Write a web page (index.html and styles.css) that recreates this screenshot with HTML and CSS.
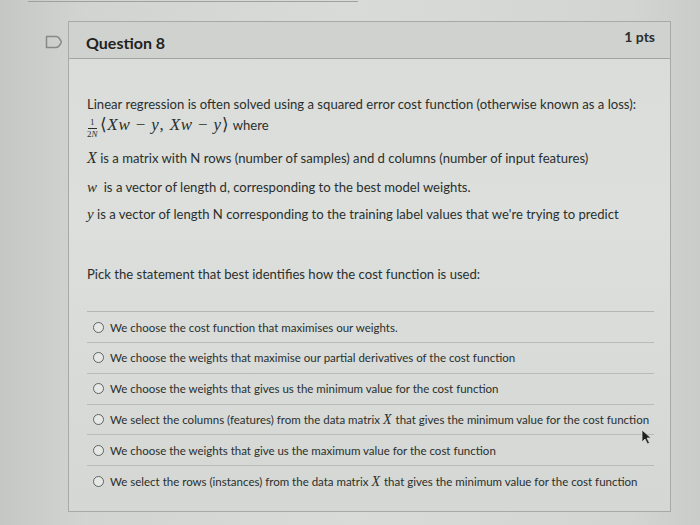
FILE: index.html
```html
<!DOCTYPE html>
<html>
<head>
<meta charset="utf-8">
<link rel="stylesheet" href="styles.css">
</head>
<body>
<div class="page">
  <div class="prev-edge"></div>
  <div class="question">
    <svg class="bookmark" width="18" height="14" viewBox="0 0 18 14" aria-hidden="true">
      <path d="M1.5 1.5 H11 Q13 1.5 14.2 3.2 L16 6.2 Q16.4 7 16 7.8 L14.2 10.8 Q13 12.5 11 12.5 H1.5 Z" fill="none" stroke="#858987" stroke-width="1.5" stroke-linejoin="round"/>
    </svg>
    <div class="q-header">
      <span class="q-title">Question 8</span>
      <span class="q-pts">1 pts</span>
    </div>
    <div class="q-body">
      <div class="q-text">
        <p class="intro">Linear regression is often solved using a squared error cost function (otherwise known as a loss):<br>
          <span class="frac"><span class="num">1</span><span class="den">2<i>N</i></span></span><span class="m">⟨<i>Xw</i> − <i>y</i>, <i>Xw</i> − <i>y</i>⟩</span> where</p>
        <p class="xline"><i class="mv">X</i> is a matrix with N rows (number of samples) and d columns (number of input features)</p>
        <p class="wline"><i class="mv sm">w</i> &nbsp;is a vector of length d, corresponding to the best model weights.</p>
        <p><i class="mv sm">y</i> is a vector of length N corresponding to the training label values that we're trying to predict</p>
        <p class="pick">Pick the statement that best identifies how the cost function is used:</p>
      </div>
      <ul class="answers">
        <li><span class="radio"></span>We choose the cost function that maximises our weights.</li>
        <li><span class="radio"></span>We choose the weights that maximise our partial derivatives of the cost function</li>
        <li><span class="radio"></span>We choose the weights that gives us the minimum value for the cost function</li>
        <li><span class="radio"></span>We select the columns (features) from the data matrix <i class="mv">X</i> that gives the minimum value for the cost function</li>
        <li><span class="radio"></span>We choose the weights that give us the maximum value for the cost function</li>
        <li><span class="radio"></span>We select the rows (instances) from the data matrix <i class="mv">X</i> that gives the minimum value for the cost function</li>
      </ul>
    </div>
    <svg class="cursor" width="12" height="16" viewBox="0 0 12 16" aria-hidden="true">
      <path d="M1 1 L1 13 L4 10 L6.5 15 L8.5 14 L6 9 L10 9 Z" fill="#1e2120" stroke="#d8dad7" stroke-width="0.8"/>
    </svg>
  </div>
</div>
</body>
</html>
```
FILE: styles.css
```css
html, body {
  margin: 0;
  padding: 0;
}
body {
  width: 700px;
  height: 525px;
  overflow: hidden;
  background: linear-gradient(90deg, #c4c7c4 0%, #d1d4d1 12%, #d8dbd8 50%, #d2d5d2 90%, #c9ccc9 100%);
  font-family: Lato, "Open Sans", sans-serif;
  color: #2a2f2d;
}
.prev-edge {
  margin-left: 28px;
  width: 330px;
  height: 1px;
  border-bottom: 1px solid #9ea29f;
}
.question {
  position: relative;
  margin: 19px 0 0 68px;
  width: 603px;
  height: 491px;
  border: 1px solid #a7aba8;
  box-sizing: border-box;
  background: linear-gradient(180deg, #d9dcd9 0%, #dcdfdc 40%, #d4d7d4 100%);
}
.bookmark {
  position: absolute;
  left: -24px;
  top: 13px;
}
.q-header {
  height: 37px;
  box-sizing: border-box;
  border-bottom: 1px solid #a2a6a3;
  background: #cfd2cf;
  display: flex;
  align-items: center;
  justify-content: space-between;
  padding: 0 15px 0 17px;
}
.q-title {
  font-size: 16px;
  font-weight: 700;
  color: #1f2321;
  padding-top: 4px;
}
.q-pts {
  font-size: 14px;
  font-weight: 700;
  color: #2a2e2c;
  padding-bottom: 8px;
}
.q-body {
  padding: 35px 14px 0 18px;
}
.q-text p {
  margin: 0 0 10px;
  font-size: 13.1px;
  line-height: 17px;
}
.q-text p.xline {
  margin-bottom: 12px;
}
.q-text p.intro {
  line-height: 21px;
  margin-bottom: 10px;
}
.frac {
  display: inline-flex;
  flex-direction: column;
  align-items: center;
  font-family: "Liberation Serif", serif;
  font-size: 9px;
  line-height: 9px;
  vertical-align: 5px;
  margin-right: 2px;
}
.frac .num {
  border-bottom: 1px solid #2a2f2d;
  padding: 0 2px 1px;
}
.frac .den {
  padding-top: 1px;
}
.m {
  font-family: "Liberation Serif", serif;
  font-size: 17px;
  line-height: 17px;
  letter-spacing: 0.8px;
}
.mv {
  font-family: "Liberation Serif", serif;
  font-size: 16px;
  line-height: 17px;
}
.mv.sm {
  font-size: 15px;
}
.q-text p.pick {
  margin-top: 43px;
  margin-bottom: 0;
}
.answers {
  list-style: none;
  margin: 28px 0 0;
  padding: 0;
  border-top: 1px solid #b3b7b4;
  width: 567px;
}
.answers li {
  display: flex;
  align-items: center;
  height: 29.8px;
  font-size: 11.5px;
  border-bottom: 1px solid #b8bcb9;
  padding-left: 6px;
  white-space: nowrap;
}
.answers li:first-child {
  height: 30px;
}
.answers li:last-child {
  border-bottom: none;
}
.answers .mv {
  font-size: 14px;
  margin: 0 4px 0 3px;
}
.radio {
  width: 9px;
  height: 9px;
  border: 1px solid #5f6461;
  border-radius: 50%;
  background: #e6e8e5;
  margin-right: 6px;
  flex: none;
}
.cursor {
  position: absolute;
  left: 572px;
  top: 407px;
}
```
